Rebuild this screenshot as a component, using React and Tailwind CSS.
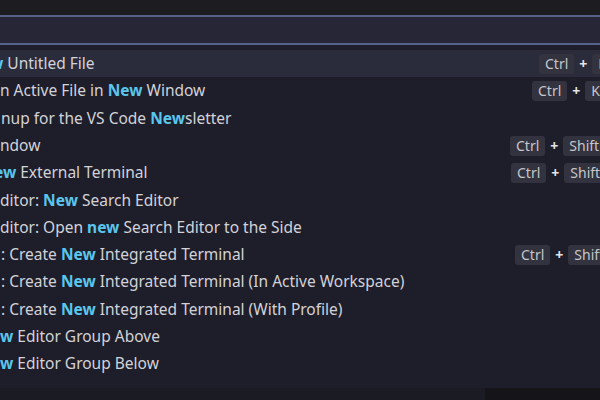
import React from 'react';

// Command palette, cropped: the panel runs past both edges of the window.

const rows = [
  { cut: 'ml-[-10px]', parts: [['w', true], [' Untitled File']], keys: ['Ctrl', 'N'], keyCol: 'w-[61px]', active: true },
  { cut: 'ml-[0px]', parts: [['n Active File in '], ['New', true], [' Window']], keys: ['Ctrl', 'K'], keyCol: 'w-[68px]' },
  { cut: 'ml-[1px]', parts: [['nup for the VS Code '], ['New', true], ['sletter']] },
  { cut: 'ml-[0px]', parts: [['ndow']], keys: ['Ctrl', 'Shift'], keyCol: 'w-[90px]' },
  { cut: 'ml-[-6px]', parts: [['ew', true], [' External Terminal']], keys: ['Ctrl', 'Shift'], keyCol: 'w-[89px]' },
  { cut: 'ml-[0px]', parts: [['ditor: '], ['New', true], [' Search Editor']] },
  { cut: 'ml-[0px]', parts: [['ditor: Open '], ['new', true], [' Search Editor to the Side']] },
  { cut: 'ml-[1px]', parts: [[': Create '], ['New', true], [' Integrated Terminal']], keys: ['Ctrl', 'Shift'], keyCol: 'w-[85px]' },
  { cut: 'ml-[1px]', parts: [[': Create '], ['New', true], [' Integrated Terminal (In Active Workspace)']] },
  { cut: 'ml-[1px]', parts: [[': Create '], ['New', true], [' Integrated Terminal (With Profile)']] },
  { cut: 'ml-[0px]', parts: [['w', true], [' Editor Group Above']] },
  { cut: 'ml-[0px]', parts: [['w', true], [' Editor Group Below']] },
];

function Keys({ keys }) {
  return (
    <div className="flex items-center gap-[5px] whitespace-nowrap">
      {keys.map((k, i) => (
        <React.Fragment key={i}>
          {i > 0 && <span className="text-[14px] font-bold text-[#e4e4e8]">+</span>}
          <span className="h-[20px] px-[6px] rounded-[3px] bg-[#32333e] text-[14px] leading-[20px] text-[#c6c6cc]">
            {k}
          </span>
        </React.Fragment>
      ))}
    </div>
  );
}

function Row({ row }) {
  return (
    <div className={`flex h-[27.3px] items-center ${row.active ? 'bg-[#2b2c3b]' : ''}`}>
      <div className={`flex-1 min-w-0 whitespace-nowrap text-[15.5px] text-[#d2d2d8] ${row.cut}`}>
        {row.parts.map(([t, hit], i) =>
          hit ? (
            <span key={i} className="font-bold text-[#5ac6ec]">{t}</span>
          ) : (
            <span key={i}>{t}</span>
          )
        )}
      </div>
      {row.keys && (
        <div className={`shrink-0 overflow-hidden ${row.keyCol}`}>
          <Keys keys={row.keys} />
        </div>
      )}
    </div>
  );
}

export default function App() {
  return (
    <div
      className="w-[600px] h-[400px] overflow-hidden flex flex-col bg-[#1e1e2a]"
      style={{ fontFamily: '"Noto Sans", "Open Sans", sans-serif' }}
    >
      <div className="h-[15px] shrink-0 bg-[#1c1c21]" />
      <div className="h-[30px] shrink-0 border-y-2 border-[#56628a] bg-[#262636]" />
      <div className="h-[5px] shrink-0" />
      <div className="flex flex-col">
        {rows.map((row, i) => (
          <Row key={i} row={row} />
        ))}
      </div>
      <div className="flex-1" />
      <div className="h-[12px] shrink-0 flex">
        <div className="flex-1 bg-[#1b1b23]" />
        <div className="w-[115px] bg-[#141419]" />
      </div>
    </div>
  );
}
